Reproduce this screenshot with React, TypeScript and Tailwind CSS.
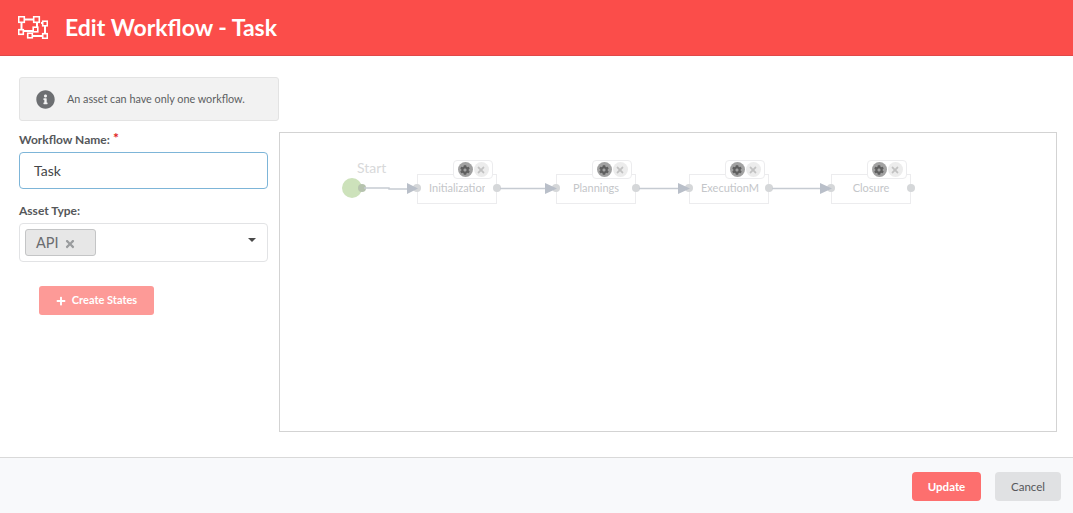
import { FaCog, FaInfoCircle, FaPlus, FaTimes } from "react-icons/fa";

const lato = "font-['Lato','Open_Sans',sans-serif]";

const nodes = [
  { name: "Initialization", left: "left-[137px]", labelW: "w-[56px]" },
  { name: "Plannings", left: "left-[276px]", labelW: "w-[56px]" },
  { name: "ExecutionManagement", left: "left-[409px]", labelW: "w-[58px]" },
  { name: "Closure", left: "left-[551px]", labelW: "w-[56px]" },
];

function WorkflowIcon() {
  return (
    <svg width="30" height="23" viewBox="18 13 30 23" fill="none" stroke="white">
      <g strokeWidth="2">
        <path d="M24 16.5H34M21.5 20V27M37 20V25M45 23V31M32 33H43M24 28H33M41 20H43" />
      </g>
      <g strokeWidth="1.6" fill="#fc4e4b">
        <rect x="18.7" y="13.7" width="5.6" height="5.6" />
        <rect x="33.7" y="13.7" width="5.6" height="5.6" />
        <rect x="18.7" y="26.7" width="4.6" height="4.6" />
        <rect x="27.7" y="30.2" width="4.6" height="4.6" />
        <rect x="33.2" y="24.2" width="4.6" height="4.6" />
        <rect x="42.7" y="18.2" width="4.6" height="4.6" />
        <rect x="42.7" y="30.7" width="4.6" height="4.6" />
      </g>
    </svg>
  );
}

function StateNode({ name, left, labelW }: { name: string; left: string; labelW: string }) {
  return (
    <div className={`absolute top-[27px] ${left} h-[44px] w-[80px]`}>
      <div className="absolute bottom-0 left-0 h-[30px] w-[80px] border border-[#ececee] bg-white pl-[11px] pt-[5px]">
        <div className={`${labelW} overflow-hidden whitespace-nowrap text-center text-[11px] leading-[16px] text-[#c4c6c9]`}>{name}</div>
      </div>
      <div className="absolute left-[36px] top-0 flex h-[19px] w-[40px] items-center justify-center gap-[1px] rounded-[4px] border border-[#ececee] bg-white">
        <span className="flex h-[15px] w-[15px] items-center justify-center rounded-full bg-[#a2a2a2]">
          <FaCog size={10} className="text-[#5f5f5f]" />
        </span>
        <span className="flex h-[15px] w-[15px] items-center justify-center rounded-full bg-[#ececec]">
          <FaTimes size={10} className="text-[#c2c2c2]" />
        </span>
      </div>
      <span className="absolute left-[-4px] top-[24px] h-[8px] w-[8px] rounded-full bg-[#d5d7d9]" />
      <span className="absolute left-[76px] top-[24px] h-[8px] w-[8px] rounded-full bg-[#d5d7d9]" />
    </div>
  );
}

export default function App() {
  return (
    <div className={`flex h-[513px] w-[1073px] flex-col overflow-hidden bg-white ${lato}`}>
      <header className="flex h-[56px] items-center gap-[17px] border-b border-[#e04848] bg-[#fb4d4a] pb-[1px] pl-[18px]">
        <WorkflowIcon />
        <h1 className="text-[23px] font-bold text-white">Edit Workflow - Task</h1>
      </header>

      <main className="flex flex-1 pl-[19px] pr-[16px]">
        <div className="w-[260px] pt-[21px]">
          <div className="flex h-[44px] items-center gap-[12px] rounded-[3px] border border-[#e3e3e3] bg-[#f2f2f2] pl-[16px]">
            <FaInfoCircle size={19} className="text-[#6d6f72]" />
            <p className="text-[10.8px] text-[#5c5e61]">An asset can have only one workflow.</p>
          </div>

          <label className="relative mt-[11px] block h-[20px] text-[12px] font-bold leading-[16px] text-[#55575a]">
            Workflow Name:
            <span className="absolute left-[94px] top-[-2px] text-[14px] text-[#e02020]">*</span>
          </label>
          <div className="flex h-[37px] w-[249px] items-center rounded-[4px] border border-[#7db5d8] pl-[14px] text-[14px] text-[#44464a]">
            Task
          </div>

          <label className="mt-[14px] block h-[20px] text-[12px] font-bold leading-[16px] text-[#55575a]">Asset Type:</label>
          <div className="flex h-[39px] w-[249px] items-center justify-between rounded-[4px] border border-[#e2e3e5] pl-[5px] pr-[11px]">
            <span className="flex h-[27px] w-[71px] items-center gap-[5px] rounded-[3px] border border-[#c4c5c6] bg-[#e7e7e7] pl-[10px] text-[14.5px] text-[#6a6c6f]">
              API <FaTimes size={12} className="mt-[2px] text-[#9a9c9e]" />
            </span>
            <span className="mb-[5px] h-0 w-0 border-x-[4px] border-t-[4px] border-x-transparent border-t-[#4a4a4a]" />
          </div>

          <button className="ml-[20px] mt-[24px] flex h-[29px] w-[115px] items-center justify-center gap-[6px] rounded-[3px] bg-[#fd9a97] text-[11px] font-bold text-white">
            <FaPlus size={10} />
            Create States
          </button>
        </div>

        <div className="relative mt-[76px] h-[300px] w-[778px] border border-[#d3d3d3] bg-white">
          <span className="absolute left-[77px] top-[26px] text-[14px] leading-[18px] text-[#d8d9da]">Start</span>
          <span className="absolute left-[62px] top-[45px] h-[20px] w-[20px] rounded-full bg-[#cde2bb]" />
          <span className="absolute left-[78px] top-[51px] h-[8px] w-[8px] rounded-full bg-[#b6c3ae]" />

          {nodes.map((n) => (
            <StateNode key={n.name} name={n.name} left={n.left} labelW={n.labelW} />
          ))}

          <svg className="absolute left-0 top-0" width="776" height="298" fill="none">
            <g stroke="#c6cbd2" strokeWidth="1.4">
              <path d="M84 55H109V56H128" />
              <path d="M220 55.5H266" />
              <path d="M359 55.5H399" />
              <path d="M492 55.5H541" />
            </g>
            <g fill="#b9bfc9">
              <path d="M127 50L138 55.5L127 61Z" />
              <path d="M265 50L277 55.5L265 61Z" />
              <path d="M398 50L410 55.5L398 61Z" />
              <path d="M540 50L552 55.5L540 61Z" />
            </g>
          </svg>
        </div>
      </main>

      <footer className="flex h-[56px] items-start justify-end gap-[14px] border-t border-[#d9d9d9] bg-[#f8f9fb] pr-[12px] pt-[14px]">
        <button className="flex h-[29px] w-[69px] items-center justify-center rounded-[4px] bg-[#fd6f6e] text-[11.5px] font-bold text-white">
          Update
        </button>
        <button className="flex h-[29px] w-[66px] items-center justify-center rounded-[4px] bg-[#e0e1e3] text-[11.5px] text-[#55575a]">
          Cancel
        </button>
      </footer>
    </div>
  );
}
